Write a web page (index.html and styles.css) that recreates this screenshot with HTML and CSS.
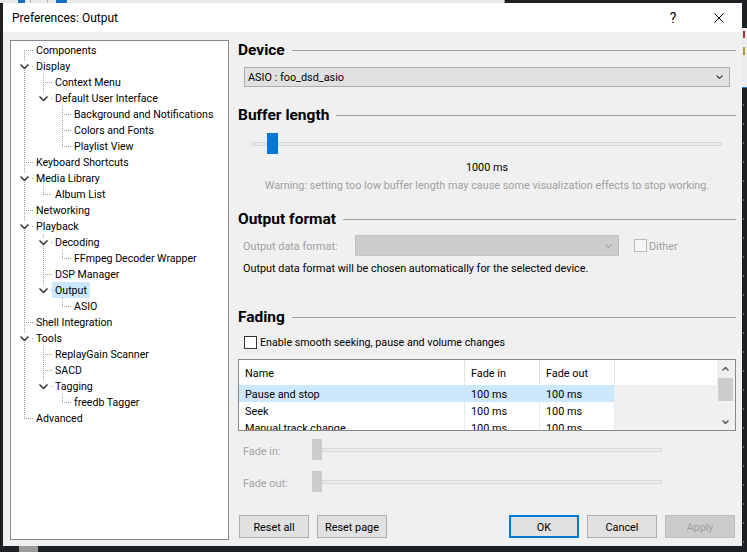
FILE: index.html
```html
<!DOCTYPE html>
<html>
<head>
<meta charset="utf-8">
<link rel="stylesheet" href="styles.css">
</head>
<body>
<div class="screen">
  <div class="backwin"><span class="bb bb1"></span><span class="bsep bs1"></span><span class="bsep bs2"></span><span class="bb bb2"></span></div>
  <div class="midrow">
    <div class="lgap"></div>
    <div class="dialog">
      <div class="titlebar">
        <div class="title">Preferences: Output</div>
        <div class="tbtn help">?</div>
        <div class="tbtn close"><svg width="10" height="10" viewBox="0 0 10 10"><path d="M0.5 0.5 L9.5 9.5 M9.5 0.5 L0.5 9.5" stroke="#000" stroke-width="1" fill="none"/></svg></div>
      </div>
      <div class="body">
        <div class="tree">
          <div class="node"><span class="c first"></span><span class="lbl">Components</span></div>
          <div class="node"><span class="c exp"><svg class="chev" width="9" height="5" viewBox="0 0 9 5"><polyline points="0.5,0.5 4.5,4.5 8.5,0.5"/></svg></span><span class="lbl">Display</span></div>
          <div class="node"><span class="c v"></span><span class="c mid"></span><span class="lbl">Context Menu</span></div>
          <div class="node"><span class="c v"></span><span class="c expl"><svg class="chev" width="9" height="5" viewBox="0 0 9 5"><polyline points="0.5,0.5 4.5,4.5 8.5,0.5"/></svg></span><span class="lbl">Default User Interface</span></div>
          <div class="node"><span class="c v"></span><span class="c e"></span><span class="c mid"></span><span class="lbl">Background and Notifications</span></div>
          <div class="node"><span class="c v"></span><span class="c e"></span><span class="c mid"></span><span class="lbl">Colors and Fonts</span></div>
          <div class="node"><span class="c v"></span><span class="c e"></span><span class="c last"></span><span class="lbl">Playlist View</span></div>
          <div class="node"><span class="c mid"></span><span class="lbl">Keyboard Shortcuts</span></div>
          <div class="node"><span class="c exp"><svg class="chev" width="9" height="5" viewBox="0 0 9 5"><polyline points="0.5,0.5 4.5,4.5 8.5,0.5"/></svg></span><span class="lbl">Media Library</span></div>
          <div class="node"><span class="c v"></span><span class="c last"></span><span class="lbl">Album List</span></div>
          <div class="node"><span class="c mid"></span><span class="lbl">Networking</span></div>
          <div class="node"><span class="c exp"><svg class="chev" width="9" height="5" viewBox="0 0 9 5"><polyline points="0.5,0.5 4.5,4.5 8.5,0.5"/></svg></span><span class="lbl">Playback</span></div>
          <div class="node"><span class="c v"></span><span class="c exp"><svg class="chev" width="9" height="5" viewBox="0 0 9 5"><polyline points="0.5,0.5 4.5,4.5 8.5,0.5"/></svg></span><span class="lbl">Decoding</span></div>
          <div class="node"><span class="c v"></span><span class="c v"></span><span class="c last"></span><span class="lbl">FFmpeg Decoder Wrapper</span></div>
          <div class="node"><span class="c v"></span><span class="c mid"></span><span class="lbl">DSP Manager</span></div>
          <div class="node"><span class="c v"></span><span class="c expl"><svg class="chev" width="9" height="5" viewBox="0 0 9 5"><polyline points="0.5,0.5 4.5,4.5 8.5,0.5"/></svg></span><span class="lbl sel">Output</span></div>
          <div class="node"><span class="c v"></span><span class="c e"></span><span class="c last"></span><span class="lbl">ASIO</span></div>
          <div class="node"><span class="c mid"></span><span class="lbl">Shell Integration</span></div>
          <div class="node"><span class="c exp"><svg class="chev" width="9" height="5" viewBox="0 0 9 5"><polyline points="0.5,0.5 4.5,4.5 8.5,0.5"/></svg></span><span class="lbl">Tools</span></div>
          <div class="node"><span class="c v"></span><span class="c mid"></span><span class="lbl">ReplayGain Scanner</span></div>
          <div class="node"><span class="c v"></span><span class="c mid"></span><span class="lbl">SACD</span></div>
          <div class="node"><span class="c v"></span><span class="c expl"><svg class="chev" width="9" height="5" viewBox="0 0 9 5"><polyline points="0.5,0.5 4.5,4.5 8.5,0.5"/></svg></span><span class="lbl">Tagging</span></div>
          <div class="node"><span class="c v"></span><span class="c e"></span><span class="c last"></span><span class="lbl">freedb Tagger</span></div>
          <div class="node"><span class="c last"></span><span class="lbl">Advanced</span></div>
        </div>

        <div class="panel">
          <div class="hd">Device</div>
          <div class="combo"><span class="ctext">ASIO : foo_dsd_asio</span><svg class="cchev" width="7" height="4" viewBox="0 0 7 4"><polyline points="0.5,0.5 3.5,3.5 6.5,0.5"/></svg></div>

          <div class="hd hd2">Buffer length</div>
          <div class="slider"><span class="thumb"></span></div>
          <div class="val">1000 ms</div>
          <div class="warn">Warning: setting too low buffer length may cause some visualization effects to stop working.</div>

          <div class="hd hd3">Output format</div>
          <div class="fmtrow">
            <span class="fmtlabel">Output data format:</span>
            <span class="dcombo"><svg class="dchev" width="7" height="4" viewBox="0 0 7 4"><polyline points="0.5,0.5 3.5,3.5 6.5,0.5"/></svg></span>
            <span class="dcheck"></span>
            <span class="dither">Dither</span>
          </div>
          <div class="info">Output data format will be chosen automatically for the selected device.</div>

          <div class="hd hd4">Fading</div>
          <div class="enrow"><span class="check"></span><span class="enlabel">Enable smooth seeking, pause and volume changes</span></div>

          <div class="list">
            <div class="lmain">
              <div class="lhead"><div class="col c1">Name</div><div class="col c2">Fade in</div><div class="col c3">Fade out</div><div class="col c4"></div></div>
              <div class="lrow sel"><div class="col c1">Pause and stop</div><div class="col c2">100 ms</div><div class="col c3">100 ms</div><div class="col c4"></div></div>
              <div class="lrow"><div class="col c1">Seek</div><div class="col c2">100 ms</div><div class="col c3">100 ms</div><div class="col c4"></div></div>
              <div class="lrow"><div class="col c1">Manual track change</div><div class="col c2">100 ms</div><div class="col c3">100 ms</div><div class="col c4"></div></div>
            </div>
            <div class="sbar">
              <div class="sbtn"><svg width="7" height="4" viewBox="0 0 7 4"><polyline points="0.5,3.5 3.5,0.5 6.5,3.5"/></svg></div>
              <div class="sthumb"></div>
              <div class="sfill"></div>
              <div class="sbtn"><svg width="7" height="4" viewBox="0 0 7 4"><polyline points="0.5,0.5 3.5,3.5 6.5,0.5"/></svg></div>
            </div>
          </div>

          <div class="frow frow1"><span class="flabel">Fade in:</span><span class="fslider"><span class="fthumb"></span></span></div>
          <div class="frow frow2"><span class="flabel">Fade out:</span><span class="fslider"><span class="fthumb"></span></span></div>

          <div class="btnrow">
            <div class="btn">Reset all</div>
            <div class="btn">Reset page</div>
            <div class="bspace"></div>
            <div class="btn ok">OK</div>
            <div class="btn">Cancel</div>
            <div class="btn dis">Apply</div>
          </div>
        </div>
      </div>
    </div>
    <div class="rstrip"><div class="rs1"></div><div class="rs2"><span class="rsred"></span><span class="rsyel"></span></div><div class="rs3"></div><div class="rs4"></div></div>
  </div>
  <div class="bottom"><span class="gblock"></span></div>
</div>
</body>
</html>
```
FILE: styles.css
```css
:root {
  --dot: #a0a0a0;
  --dv: repeating-linear-gradient(to bottom, var(--dot) 0 1px, transparent 1px 2px);
  --dh: repeating-linear-gradient(to right, var(--dot) 0 1px, transparent 1px 2px);
}
* { box-sizing: border-box; }
body {
  margin: 0;
  background: #1d2126;
  font-family: Roboto, "Liberation Sans", sans-serif;
  font-size: 10.85px;
  color: #000;
}
.screen { width: 747px; height: 552px; overflow: hidden; display: flex; flex-direction: column; }

/* background window fragments */
.backwin { height: 3px; width: 505px; flex: none; background: #ebebeb; display: flex; border-right: 1px solid #9a9a9a; }
.bb { background: #1670c4; height: 3px; }
.bb1 { margin-left: 18px; width: 7px; }
.bsep { width: 1px; background: #b5b5b5; }
.bs1 { margin-left: 5px; }
.bs2 { margin-left: 16px; }
.bb2 { margin-left: 8px; width: 11px; }

.midrow { display: flex; height: 543px; flex: none; }
.lgap { width: 3px; flex: none; }
.dialog { width: 739px; flex: none; display: flex; flex-direction: column; background: #f0f0f0; }

.titlebar { height: 29px; flex: none; background: #fff; display: flex; align-items: center; padding-left: 9px; font-size: 12px; }
.title { flex: 1; padding-top: 1px; }
.tbtn { width: 46px; height: 29px; display: flex; align-items: center; justify-content: center; }
.help { font-size: 14px; padding-top: 1px; }
.close svg { display: block; }

.body { flex: 1; display: flex; padding: 8px 6px 0 7px; gap: 9px; }

/* tree */
.tree { width: 219px; height: 500px; flex: none; background: #fff; border: 1px solid #828790; padding: 1px 0 0 3px; font-size: 10.6px; }
.node { height: 16px; display: flex; align-items: flex-start; }
.c { width: 19px; height: 16px; flex: none; display: flex; align-items: center; }
.v { background: var(--dv) 10px 0 / 1px 16px no-repeat; }
.mid { background: var(--dh) 12px 8px / 7px 1px no-repeat, var(--dv) 10px 0 / 1px 16px no-repeat; }
.first { background: var(--dh) 12px 8px / 7px 1px no-repeat, var(--dv) 10px 8px / 1px 8px no-repeat; }
.last { background: var(--dh) 12px 8px / 7px 1px no-repeat, var(--dv) 10px 0 / 1px 9px no-repeat; }
.exp { background: linear-gradient(var(--dot), var(--dot)) 18px 8px / 1px 1px no-repeat, var(--dv) 10px 0 / 1px 4px no-repeat, var(--dv) 10px 12px / 1px 4px no-repeat; }
.expl { background: linear-gradient(var(--dot), var(--dot)) 18px 8px / 1px 1px no-repeat, var(--dv) 10px 0 / 1px 4px no-repeat; }
.chev { margin-left: 6px; display: block; fill: none; stroke: #333; stroke-width: 1.5; }
.lbl { height: 16px; line-height: 16px; padding: 1px 3px 0; white-space: nowrap; }
.lbl.sel { background: #cce8ff; }

/* right panel */
.panel { width: 498px; flex: none; display: flex; flex-direction: column; }
.hd { height: 20px; flex: none; display: flex; align-items: center; font-weight: 700; font-size: 15.5px; white-space: nowrap; }
.hd::after { content: ""; flex: 1; height: 1px; background: #a0a0a0; margin-left: 7px; }
.hd2 { margin-top: 18px; }
.hd3 { margin-top: 16px; }
.hd4 { margin-top: 31px; }

.combo { margin: 7px 6px 0 6px; height: 20px; flex: none; border: 1px solid #adadad; background: #e1e1e1; display: flex; align-items: center; padding-left: 3px; }
.ctext { flex: 1; padding-top: 1px; }
.cchev { margin-right: 6px; fill: none; stroke: #444; stroke-width: 1.1; }

.slider {
  margin: 8px 0 0 14px; width: 470px; height: 21px; flex: none; display: flex;
  background:
    linear-gradient(#e7eaea, #e7eaea) 1px 10px / calc(100% - 2px) 2px no-repeat,
    linear-gradient(#d6d6d6, #d6d6d6) 0 9px / 100% 4px no-repeat;
}
.thumb { margin-left: 15px; width: 11px; height: 21px; background: #0078d7; }
.val { margin-top: 5px; height: 16px; line-height: 16px; padding-top: 1px; text-align: center; }
.warn { margin-top: 2px; height: 16px; line-height: 16px; padding-top: 1px; text-align: center; color: #a0a0a0; white-space: nowrap; }

.fmtrow { margin-top: 6px; height: 21px; flex: none; display: flex; align-items: center; }
.fmtlabel { margin-left: 5px; width: 112px; color: #a0a0a0; padding-top: 2px; }
.dcombo { width: 264px; height: 21px; background: #cccccc; border: 1px solid #c2c2c2; display: flex; align-items: center; justify-content: flex-end; }
.dchev { margin-right: 6px; fill: none; stroke: #a6a6a6; stroke-width: 1.1; }
.dcheck { margin-left: 15px; width: 13px; height: 13px; border: 1px solid #bcbcbc; background: #f6f6f6; }
.dither { margin-left: 2px; color: #a0a0a0; padding-top: 2px; }
.info { margin-top: 4px; padding: 1px 0 0 5px; height: 16px; line-height: 16px; }

.enrow { margin-top: 7px; height: 16px; flex: none; display: flex; align-items: center; padding-left: 6px; }
.check { width: 13px; height: 13px; border: 1px solid #333; background: #fff; flex: none; }
.enlabel { margin-left: 3px; padding-top: 1px; font-size: 10.7px; }

/* list */
.list { margin-top: 9px; height: 72px; flex: none; border: 1px solid #828790; display: flex; overflow: hidden; }
.lmain { flex: 1; background: #fff; overflow: hidden; }
.lhead { height: 25px; display: flex; }
.lrow { height: 17px; display: flex; }
.col { flex: none; padding: 1px 0 0 6px; white-space: nowrap; overflow: hidden; }
.lhead .col { line-height: 25px; }
.lrow .col { line-height: 17px; }
.c1 { width: 225px; }
.c2, .c3 { width: 75px; }
.c4 { flex: 1; }
.lhead .col + .col { border-left: 1px solid #e5e5e5; }
.lrow .col + .col { border-left: 1px solid #e4ecf5; }
.lrow .c4 { background: #f0f0f0; }
.lrow.sel .c1, .lrow.sel .c2, .lrow.sel .c3 { background: #cce8ff; border-left-color: #cce8ff; }
.sbar { width: 18px; flex: none; background: #f0f0f0; display: flex; flex-direction: column; }
.sbtn { height: 17px; flex: none; display: flex; align-items: center; justify-content: center; padding-right: 1px; }
.sbtn svg { fill: none; stroke: #606060; stroke-width: 1.5; }
.sthumb { margin: 1px 2px 0 1px; height: 23px; flex: none; background: #cdcdcd; }
.sfill { flex: 1; }

/* fade sliders */
.frow { height: 21px; flex: none; display: flex; align-items: center; padding-left: 5px; }
.frow1 { margin-top: 8px; }
.frow2 { margin-top: 11px; }
.flabel { width: 69px; color: #a3a3a3; padding-top: 3px; }
.fslider {
  width: 350px; height: 21px; display: flex;
  background:
    linear-gradient(#e9ebeb, #e9ebeb) 1px 10px / calc(100% - 2px) 2px no-repeat,
    linear-gradient(#dadada, #dadada) 0 9px / 100% 4px no-repeat;
}
.fthumb { width: 10px; height: 21px; background: #cccccc; }

/* buttons */
.btnrow { margin-top: 23px; height: 23px; flex: none; display: flex; gap: 8px; padding: 0 1px; }
.bspace { flex: 1; }
.btn { width: 70px; height: 23px; border: 1px solid #adadad; background: #e1e1e1; display: flex; align-items: center; justify-content: center; padding-top: 1px; }
.btn.ok { border: 2px solid #0078d7; }
.btn.dis { background: #cccccc; border-color: #bfbfbf; color: #a0a0a0; }

/* right-hand fragments of background */
.rstrip { width: 5px; flex: none; display: flex; flex-direction: column; }
.rs1 { height: 25px; }
.rs2 { height: 59px; background: #ececec; display: flex; flex-direction: column; }
.rsred { margin: 3px 0 0 1px; width: 2px; height: 7px; background: #a8323c; }
.rsyel { margin: 9px 0 0 1px; width: 2px; height: 8px; background: #b89a3a; }
.rs3 { height: 1px; background: #2a7ad0; }
.rs4 { flex: 1; background: repeating-linear-gradient(to bottom, transparent 0 16px, #8a6a6a 16px 18px, transparent 18px 19px) 1px 0 / 1px 100% no-repeat; }

.bottom { height: 6px; flex: none; display: flex; }
.gblock { margin-left: 19px; width: 19px; background: #9a9a9a; }
```
